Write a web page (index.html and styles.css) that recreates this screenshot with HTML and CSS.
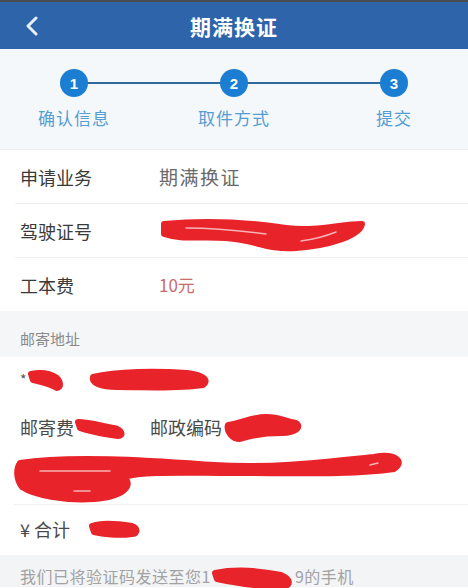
FILE: index.html
```html
<!DOCTYPE html>
<html>
  <head>
    <link rel="stylesheet" href="styles.css">
  </head>
  <body>
    <header class="top-bar">
      <svg class="back" viewBox="0 0 14 20" fill="none">
        <polyline points="11 2 3 10 11 18"></polyline>
      </svg>
      <h1 class="title">期满换证</h1>
    </header>

    <section class="steps">
      <div class="step-row">
        <span class="dot">1</span>
        <span class="dot">2</span>
        <span class="dot">3</span>
      </div>
      <div class="step-labels">
        <span>确认信息</span>
        <span>取件方式</span>
        <span>提交</span>
      </div>
    </section>

    <section class="info">
      <div class="row">
        <span class="label">申请业务</span>
        <span class="value">期满换证</span>
      </div>
      <div class="row">
        <span class="label">驾驶证号</span>
        <svg class="scribble" width="215" height="44" viewBox="0 0 215 44">
          <path d="M8 10 C50 6 90 8 130 14 C160 18 185 10 206 10 C204 22 172 32 140 34 C110 36 100 26 70 24 C45 22 25 26 8 20 Z"></path>
          <path class="gloss" d="M30 14 C60 14 80 16 110 20"></path>
          <path class="gloss" d="M145 27 C160 25 170 22 180 18"></path>
        </svg>
      </div>
      <div class="row">
        <span class="label">工本费</span>
        <span class="value fee">10元</span>
      </div>
    </section>

    <div class="group-title">邮寄地址</div>

    <section class="address">
      <div class="line">
        <span class="star">*</span>
        <svg class="scribble" width="40" height="26" viewBox="0 0 40 26">
          <path d="M4 8 C14 6 24 8 30 12 C34 16 34 22 30 22 C24 18 14 16 6 14 Z"></path>
        </svg>
        <svg class="scribble gap" width="126" height="28" viewBox="0 0 126 28">
          <path d="M6 12 C30 6 70 6 100 8 C118 10 122 16 116 20 C90 24 60 22 30 22 C14 22 4 18 6 12 Z"></path>
        </svg>
      </div>
      <div class="line">
        <span>邮寄费</span>
        <svg class="scribble" width="52" height="26" viewBox="0 0 52 26">
          <path d="M4 8 C16 8 28 12 40 14 C48 16 50 22 44 22 C30 20 16 18 6 14 Z"></path>
        </svg>
        <span class="postcode">邮政编码</span>
        <svg class="scribble" width="82" height="32" viewBox="0 0 82 32">
          <path d="M6 14 C20 12 30 6 44 6 C58 6 62 10 74 12 C80 16 74 22 60 22 C44 22 30 24 18 28 C10 28 4 20 6 14 Z"></path>
        </svg>
      </div>
      <div class="line big">
        <svg class="scribble" width="392" height="52" viewBox="0 0 392 52">
          <path d="M6 12 C60 4 140 10 200 14 C260 18 320 10 360 6 C380 2 392 10 380 18 C340 24 280 22 220 22 C170 22 130 20 110 26 C120 34 110 46 80 48 C50 50 20 44 8 36 C2 28 2 18 6 12 Z"></path>
          <path class="gloss" d="M26 20 L96 20"></path>
          <path class="gloss" d="M60 40 L76 40"></path>
          <path class="gloss" d="M356 14 L364 12"></path>
        </svg>
      </div>
      <div class="line total">
        <span>¥ 合计</span>
        <svg class="scribble" width="52" height="22" viewBox="0 0 52 22">
          <path d="M4 8 C14 4 32 6 44 8 C50 10 50 16 44 16 C30 18 14 16 6 14 Z"></path>
        </svg>
      </div>
    </section>

    <footer class="notice">
      <span>我们已将验证码发送至您1</span>
      <svg class="scribble" width="84" height="24" viewBox="0 0 84 24">
        <path d="M4 6 C24 2 50 4 70 8 C80 12 80 18 72 20 C50 20 26 16 6 12 Z"></path>
      </svg>
      <span>9的手机</span>
    </footer>
  </body>
</html>
```

FILE: styles.css
```css
* {
  margin: 0;
  padding: 0;
  box-sizing: border-box;
}

body {
  width: 468px;
  height: 588px;
  overflow: hidden;
  background: #ffffff;
  font-family: "Noto Sans CJK SC", "Noto Sans", sans-serif;
  color: #3a3a3a;
}

.top-bar {
  height: 49px;
  border-top: 2px solid #4a4e54;
  background: #2e64a9;
  display: flex;
  align-items: center;
  position: relative;
}

.back {
  width: 14px;
  height: 20px;
  margin-left: 25px;
  stroke: #e8f1fb;
  stroke-width: 3;
  stroke-linecap: round;
  stroke-linejoin: round;
}

.title {
  position: absolute;
  left: 0;
  right: 0;
  text-align: center;
  font-size: 21px;
  font-weight: 700;
  color: #ffffff;
  letter-spacing: 1px;
  pointer-events: none;
}

.steps {
  height: 101px;
  background: #f4f8fa;
  padding-top: 20px;
  border-bottom: 1px solid #eef1f3;
}

.step-row {
  position: relative;
  display: grid;
  grid-template-columns: 148px 172px 148px;
  justify-items: center;
}

.step-row::before {
  content: "";
  position: absolute;
  left: 74px;
  right: 74px;
  top: 13px;
  height: 2px;
  background: #2c6b9c;
}

.dot {
  position: relative;
  width: 28px;
  height: 28px;
  border-radius: 50%;
  background: #1b7ed3;
  color: #ffffff;
  font-family: "Liberation Sans", sans-serif;
  font-weight: 700;
  font-size: 15px;
  display: flex;
  align-items: center;
  justify-content: center;
}

.step-labels {
  display: grid;
  grid-template-columns: 148px 172px 148px;
  justify-items: center;
  margin-top: 9px;
  font-size: 17px;
  line-height: 24px;
  color: #559dd2;
  letter-spacing: 1px;
}

.info .row {
  height: 54px;
  display: flex;
  align-items: center;
  margin-left: 15px;
  padding-left: 5px;
  border-bottom: 1px solid #eeeeee;
}

.info .row:last-child {
  border-bottom: none;
  height: 53px;
}

.label {
  width: 139px;
  font-size: 18px;
  color: #3a3a3a;
}

.value {
  font-size: 19px;
  letter-spacing: 1.5px;
  color: #6a6a6a;
}

.value.fee {
  font-size: 17px;
  letter-spacing: 0;
  color: #c96a6d;
}

.info .row .scribble {
  margin-left: -3px;
  margin-top: 10px;
}

.scribble path {
  fill: #e8232a;
  stroke: #e8232a;
  stroke-width: 6;
  stroke-linejoin: round;
}

.scribble .gloss {
  fill: none;
  stroke: #f6b4b6;
  stroke-width: 1.5;
  stroke-linecap: round;
}

.group-title {
  height: 46px;
  background: #f4f6f8;
  padding: 17px 0 0 20px;
  font-size: 15px;
  line-height: 22px;
  color: #8a8a8a;
}

.address {
  padding-left: 20px;
  height: 198px;
}

.line {
  display: flex;
  align-items: center;
  height: 44px;
  font-size: 18px;
  color: #4a4a4a;
}

.line + .line {
  margin-top: 4px;
}

.star {
  font-size: 14px;
  color: #555555;
}

.gap {
  margin-left: 20px;
}

.postcode {
  margin-left: 24px;
}

.line.big {
  height: 54px;
  margin-left: -6px;
  margin-top: 2px;
  align-items: flex-start;
  border-bottom: 1px solid #f1f1f1;
}

.line.total {
  margin-top: 3px;
  height: 42px;
}

.line.total .scribble {
  margin-left: 18px;
}

.notice {
  height: 32px;
  background: #f2f4f6;
  display: flex;
  align-items: flex-end;
  padding-left: 20px;
  font-size: 16px;
  line-height: 22px;
  color: #a2a2a2;
  letter-spacing: 0.5px;
}

.notice .scribble {
  margin-bottom: -4px;
}
```
